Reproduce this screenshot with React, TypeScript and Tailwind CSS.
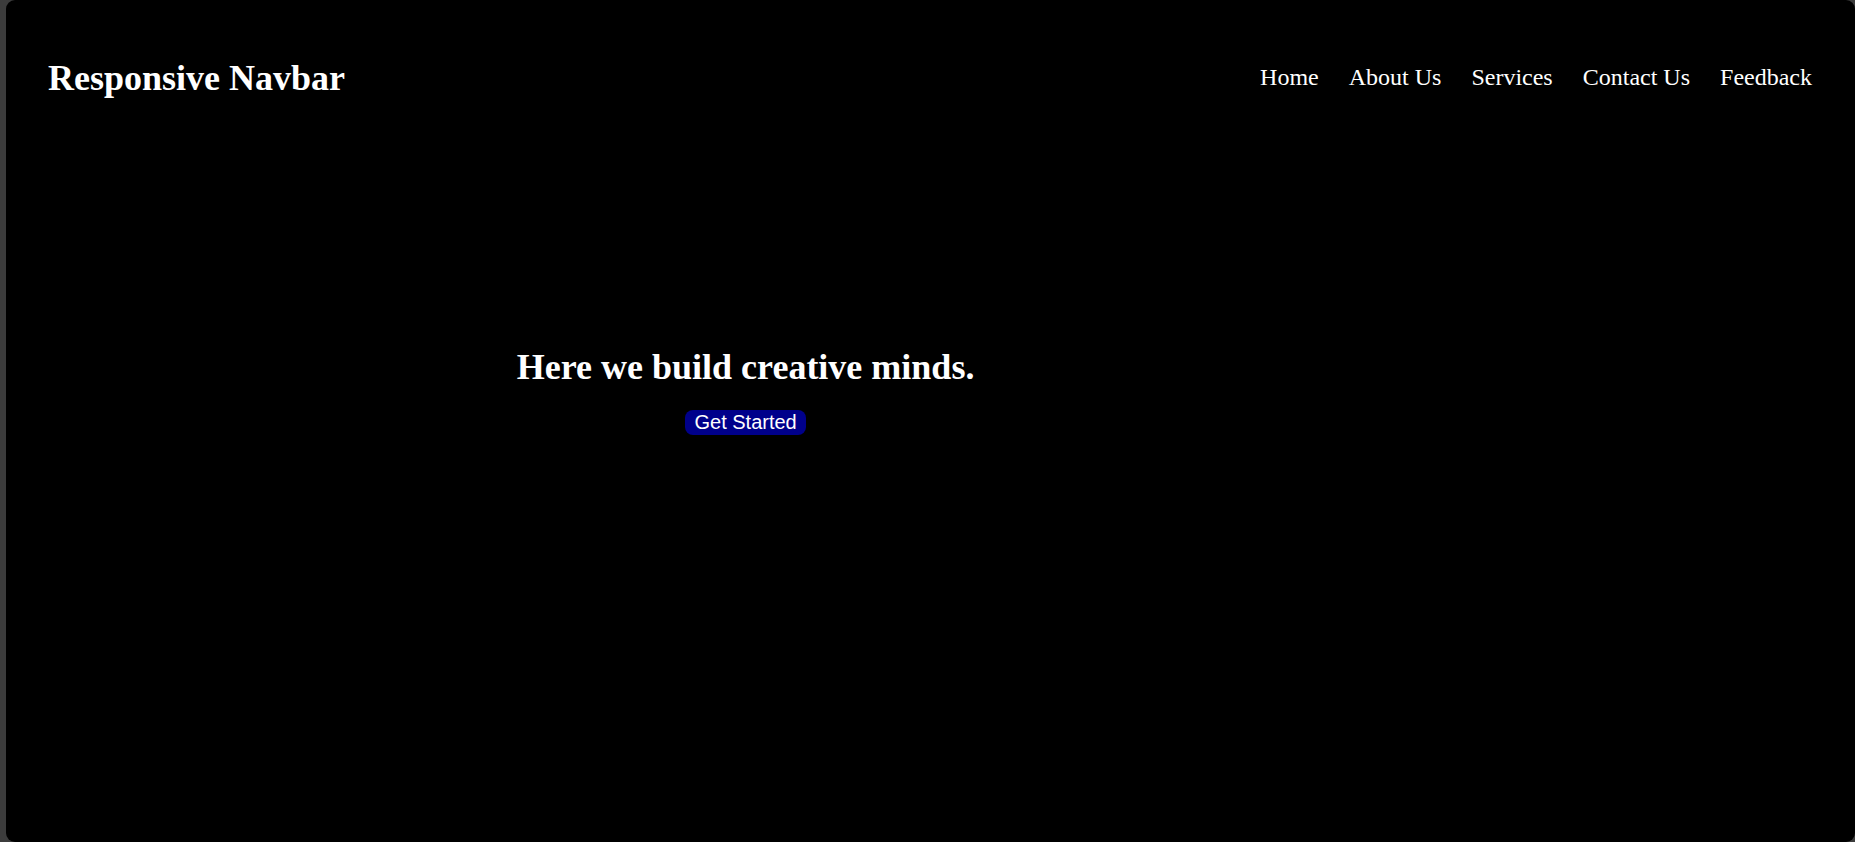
const links = ["Home", "About Us", "Services", "Contact Us", "Feedback"];

export default function App() {
  return (
    <div className="min-h-screen bg-[#3c3c3c] pl-[6px]">
      <div className="flex h-[842px] flex-col rounded-[9px] bg-black font-['Liberation_Serif',serif] text-white">
        <header className="flex items-center justify-between pl-[42px] pr-[43px] pt-[58px]">
          <h1 className="text-[36px] font-bold leading-[41px]">Responsive Navbar</h1>
          <nav className="mb-[3px]">
            <ul className="flex gap-[30px] text-[24px] leading-[28px]">
              {links.map((link) => (
                <li key={link}>
                  <a href="#" className="text-white">
                    {link}
                  </a>
                </li>
              ))}
            </ul>
          </nav>
        </header>

        <section className="mt-[248px] flex w-4/5 flex-col items-center text-center">
          <h2 className="text-[36px] font-bold leading-[41px]">Here we build creative minds.</h2>
          <button className="mt-[22px] rounded-[8px] bg-[#00008b] px-[9px] py-px font-['Liberation_Sans',Arial,sans-serif] text-[20px] leading-[23px] text-white">
            Get Started
          </button>
        </section>
      </div>
    </div>
  );
}
